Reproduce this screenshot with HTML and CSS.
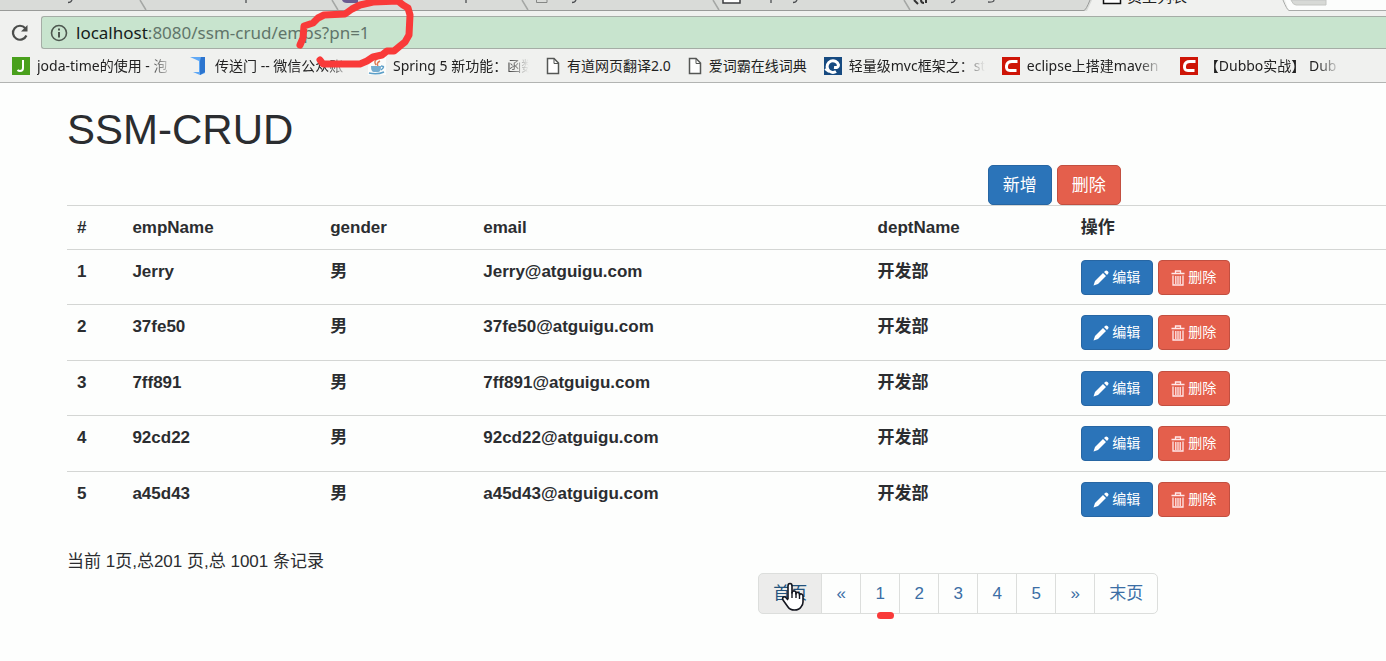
FILE: index.html
```
<!DOCTYPE html>
<html lang="zh-CN">
<head>
<meta charset="utf-8">
<title>员工列表</title>
<link rel="stylesheet" href="styles.css">
</head>
<body>
<header class="browser">
  <div class="tabs">
    <svg class="tabs-art" width="1386" height="11" viewBox="0 0 1386 11" fill="none" aria-hidden="true">
      <path d="M1087 11L1094 -4H1284L1290 11z" fill="#f0f1ef"/>
      <path d="M1284 -3L1289 11H1386V0z" fill="#fcfdfc"/>
      <path d="M0 10.500H1084Q1086 10 1090 0" stroke="#999b99"/>
      <path d="M1283 0Q1287 10 1289 10.500H1386" stroke="#a9aba9"/>
      <path d="M140 0L146 10M332 0L338 10M522 0L528 10M713 0L719 10M904 0L910 10" stroke="#a5a7a5" stroke-width="1.500"/>
      <path d="M1291 0Q1293 5 1296 5H1326V0z" fill="#d7d9d6" stroke="#c4c6c3"/>
      <path d="M342 0Q343 3 347 3H358V0z" fill="#6a5b90"/>
      <path d="M536.500 0V2.500H547V0" stroke="#858785"/>
      <path d="M723 0V3H740V0" fill="#fff" stroke="#3c3e40" stroke-width="1.500"/>
      <path d="M1103.500 0V3.500H1120.500V0" fill="#fff" stroke="#111" stroke-width="1.500"/>
      <path d="M914 0L918 4M921 0Q921 3 924 3M926 0V3" stroke="#333" stroke-width="2"/>
      <path d="M72 0Q71 2.500 68 2.500M246 0V3M466 0V3M576 0Q575 2.500 572 2.500M771 0V3M797 0Q796 2.500 793 2.500M955 0Q954 2.500 951 2.500M994 0Q994 2.500 988 2" stroke="#4d4f52" stroke-width="1.300"/>
    </svg>
    <span class="tab-title">员工列表</span>
  </div>
  <div class="toolbar">
    <button class="reload" aria-label="Reload">
      <svg width="20" height="20" viewBox="0 0 20 20" fill="none"><path d="M16.400 12.500A7 7 0 1 1 15.300 5.200" stroke="#4b4d4b" stroke-width="2.200"/><path d="M17.500 2V8.500H11z" fill="#4b4d4b"/></svg>
    </button>
    <div class="address">
      <svg width="18" height="18" viewBox="0 0 18 18" fill="none"><circle cx="9" cy="9" r="7.500" stroke="#4d574f" stroke-width="1.600"/><path d="M9 8V13.500M9 4.500V6.500" stroke="#4d574f" stroke-width="2"/></svg>
      <div class="url" role="textbox" aria-label="Address"><b>localhost</b>:8080/ssm-crud/emps?pn=1</div>
    </div>
  </div>
  <nav class="bookmarks">
    <a href="#"><svg width="18" height="18" viewBox="0 0 18 18" fill="none"><path d="M0 0H18V18H0z" fill="#49a01c"/><path d="M11 3V11Q11 14 8 14Q6.500 14 5.500 13" stroke="#fff" stroke-width="2"/></svg><span class="fade">joda-time的使用 - 泡</span></a>
    <a href="#"><svg width="18" height="18" viewBox="0 0 18 18"><path d="M0 0H11L15 2V16L10 18L3 15H9V4z" fill="#5fa8f5"/><path d="M11 0H15V15L10 18V4z" fill="#2c75cf"/></svg><span class="fade">传送门 -- 微信公众账</span></a>
    <a href="#"><svg width="18" height="18" viewBox="0 0 18 18" fill="none"><path d="M0 0H18V18H0z" fill="#fafcfb"/><path d="M10 1Q5 4 8 8M12 4Q8 6 10 9" stroke="#df7a55" stroke-width="1.500"/><path d="M3 9H13Q13 15 10 15H6Q3 15 3 9z" fill="#75add0"/><path d="M13 9Q18 9 13 13M1 16Q9 18 16 15" stroke="#5c9fc8" stroke-width="1.500"/></svg><span class="fade">Spring 5 新功能：函数</span></a>
    <a href="#"><svg width="14" height="18" viewBox="0 0 14 18" fill="none"><path d="M1.500 1.500H8L12.500 6V16.500H1.500z" fill="#fff" stroke="#555755" stroke-width="1.500"/><path d="M8 1.500V6.500H12.500" stroke="#555755"/></svg><span>有道网页翻译2.0</span></a>
    <a href="#"><svg width="14" height="18" viewBox="0 0 14 18" fill="none"><path d="M1.500 1.500H8L12.500 6V16.500H1.500z" fill="#fff" stroke="#555755" stroke-width="1.500"/><path d="M8 1.500V6.500H12.500" stroke="#555755"/></svg><span>爱词霸在线词典</span></a>
    <a href="#"><svg width="18" height="18" viewBox="0 0 18 18" fill="none"><path d="M0 0H18V18H0z" fill="#164a80"/><path d="M12 14.500A5.800 5.800 0 1 1 14.500 8Q14.500 11 10 10.500" stroke="#fff" stroke-width="3"/><path d="M1 12L5 15" stroke="#fff" stroke-width="2"/></svg><span class="fade">轻量级mvc框架之：st</span></a>
    <a href="#"><svg width="18" height="18" viewBox="0 0 18 18" fill="none"><path d="M0 0H18V18H0z" fill="#ce1507"/><path d="M15.500 4.500H10Q5 4.500 4.500 9T8 13.500H14.500" stroke="#fff" stroke-width="3"/></svg><span class="fade">eclipse上搭建maven</span></a>
    <a href="#"><svg width="18" height="18" viewBox="0 0 18 18" fill="none"><path d="M0 0H18V18H0z" fill="#ce1507"/><path d="M15.500 4.500H10Q5 4.500 4.500 9T8 13.500H14.500" stroke="#fff" stroke-width="3"/></svg><span class="fade">【Dubbo实战】 Dub</span></a>
  </nav>
  <svg class="scrawl" width="130" height="75" viewBox="290 -5 130 75" fill="none" aria-hidden="true"><path d="M300 45L303 38L304 26L313 23L318 18L324 15L345 14L352 9L360 5L373 2L398 1L403 5L408 8L410 15L409 35L405 42L400 46L394 51L387 51L382 55L373 57L367 61L360 64L323 64L320 60" stroke="#f93a39" stroke-width="7" stroke-linecap="round" stroke-linejoin="round"/></svg>
</header>
<svg class="defs" width="0" height="0" aria-hidden="true">
  <symbol id="pencil" viewBox="0 0 16 16"><path d="M0.500 15.500L2 11L10 3L13 6L5 14zM11 2L12.500 0.700Q13.500 0 14.500 1L15.200 1.700Q16 2.700 15.200 3.600L14 5z" fill="#fff"/></symbol>
  <symbol id="trash" viewBox="0 0 14 16"><path d="M0.500 3.500H13.500M4.500 3V1H9.500V3M2 5.500V15H12V5.500M4.800 6V14M7 6V14M9.200 6V14" fill="none" stroke="#ffe9ea" stroke-width="1.300"/></symbol>
</svg>
<main class="page">
  <h1>SSM-CRUD</h1>
  <div class="actions">
    <button class="btn primary">新增</button>
    <button class="btn danger">删除</button>
  </div>
  <table class="employees">
    <thead>
      <tr><th class="c-id">#</th><th class="c-name">empName</th><th class="c-gender">gender</th><th class="c-email">email</th><th class="c-dept">deptName</th><th>操作</th></tr>
    </thead>
    <tbody>
      <tr><th>1</th><th>Jerry</th><th>男</th><th>Jerry@atguigu.com</th><th>开发部</th><td><div class="ops"><button class="btn small primary"><svg width="16" height="16"><use href="#pencil"/></svg>编辑</button><button class="btn small danger"><svg width="14" height="16"><use href="#trash"/></svg>删除</button></div></td></tr>
      <tr><th>2</th><th>37fe50</th><th>男</th><th>37fe50@atguigu.com</th><th>开发部</th><td><div class="ops"><button class="btn small primary"><svg width="16" height="16"><use href="#pencil"/></svg>编辑</button><button class="btn small danger"><svg width="14" height="16"><use href="#trash"/></svg>删除</button></div></td></tr>
      <tr><th>3</th><th>7ff891</th><th>男</th><th>7ff891@atguigu.com</th><th>开发部</th><td><div class="ops"><button class="btn small primary"><svg width="16" height="16"><use href="#pencil"/></svg>编辑</button><button class="btn small danger"><svg width="14" height="16"><use href="#trash"/></svg>删除</button></div></td></tr>
      <tr><th>4</th><th>92cd22</th><th>男</th><th>92cd22@atguigu.com</th><th>开发部</th><td><div class="ops"><button class="btn small primary"><svg width="16" height="16"><use href="#pencil"/></svg>编辑</button><button class="btn small danger"><svg width="14" height="16"><use href="#trash"/></svg>删除</button></div></td></tr>
      <tr><th>5</th><th>a45d43</th><th>男</th><th>a45d43@atguigu.com</th><th>开发部</th><td><div class="ops"><button class="btn small primary"><svg width="16" height="16"><use href="#pencil"/></svg>编辑</button><button class="btn small danger"><svg width="14" height="16"><use href="#trash"/></svg>删除</button></div></td></tr>
    </tbody>
  </table>
  <p class="summary">当前 1页,总201 页,总 1001 条记录</p>
  <nav class="pagination">
    <a class="hover" href="#">首页<svg class="hand" width="24" height="30" viewBox="0 0 24 30"><path d="M7 17V4Q7 1.500 9 1.500T11 4V11Q11 9 13 9T15 11V12Q15 10 17 10.500T18.500 13Q19 11.500 20.500 12T22 14V20Q22 23 20 25Q18 28 13.500 28Q9 28 7 25L2 18Q1 16 2.500 15T7 18" fill="#fff" stroke="#14161f" stroke-width="1.600" stroke-linejoin="round"/><path d="M11 10V16M15 11V16M18.500 12V17" stroke="#14161f" stroke-width="1.400"/></svg></a>
    <a href="#">«</a>
    <a class="current" href="#">1<i class="underline"></i></a>
    <a href="#">2</a>
    <a href="#">3</a>
    <a href="#">4</a>
    <a href="#">5</a>
    <a href="#">»</a>
    <a href="#">末页</a>
  </nav>
</main>
</body>
</html>
```
FILE: styles.css
```
* { box-sizing: border-box; }

body {
  margin: 0;
  background: #fdfefd;
  color: #2b2d30;
  font: 17px/23px "Liberation Sans", "Noto Sans CJK SC", sans-serif;
}

button { font: inherit; cursor: pointer; }
a { text-decoration: none; }
svg { flex: none; }
.defs { display: none; }

/* Browser chrome */
.browser {
  position: relative;
  overflow: hidden;
  background: #f0f1ef;
  border-bottom: 1px solid #b2b4b2;
  font-family: "Noto Sans", "Noto Sans CJK SC", sans-serif;
}

.tabs {
  position: relative;
  height: 11px;
  overflow: hidden;
  background: #d9dbd8;
}
.tabs-art { display: block; }
.tab-title {
  position: absolute;
  left: 1127px;
  bottom: 5px;
  font-size: 15px;
  line-height: 20px;
  color: #222;
}

.toolbar {
  display: flex;
  align-items: center;
  padding: 5px 0 0 10px;
}
.reload {
  display: flex;
  width: 31px;
  padding: 0;
  border: 0;
  background: none;
}
.address {
  display: flex;
  flex: 1;
  align-items: center;
  gap: 8px;
  height: 33px;
  padding-left: 8px;
  border: 1px solid #a5ada6;
  border-right: 0;
  border-radius: 3px 0 0 3px;
  background: #c8e4ce;
}
.url { font-size: 17px; color: #61756a; white-space: nowrap; }
.url b { font-weight: 400; color: #15201a; }

.bookmarks {
  display: flex;
  gap: 17px;
  height: 33px;
  padding-left: 12px;
  align-items: center;
}
.bookmarks a {
  display: flex;
  flex: none;
  align-items: center;
  gap: 7px;
  font-size: 14px;
  color: #222;
  white-space: nowrap;
}
.fade {
  width: 136px;
  -webkit-mask-image: linear-gradient(to right, #000 82%, transparent);
  mask-image: linear-gradient(to right, #000 82%, transparent);
}
.scrawl { position: absolute; left: 290px; top: -5px; }

/* Page */
.page { padding: 0 0 24px 67px; }

h1 {
  margin: 0;
  padding: 23px 0 11px;
  font-size: 42px;
  line-height: 48px;
  font-weight: 400;
}

.actions { display: flex; gap: 5px; padding-left: 69.8%; }

.btn {
  display: flex;
  align-items: center;
  justify-content: center;
  height: 40px;
  padding: 0 14px;
  border: 1px solid;
  border-radius: 5px;
  font-size: 17px;
  color: #fff;
  white-space: nowrap;
}
.primary { background: #2b74b9; border-color: #2766a3; }
.danger { background: #e45f4c; border-color: #c24f40; }
.small { gap: 3px; width: 72px; height: 35px; padding: 0; font-size: 14px; border-radius: 4px; }

.employees {
  width: 100%;
  table-layout: fixed;
  border-spacing: 0;
}
.employees th, .employees td {
  padding: 10px 10px 9px;
  border-top: 1px solid #d4d6d4;
  text-align: left;
  vertical-align: top;
}
.employees thead th { padding-bottom: 10px; }
.employees tbody tr:nth-child(even) > * { padding-bottom: 10px; }
.c-id { width: 4.2%; }
.c-name { width: 15%; }
.c-gender { width: 11.6%; }
.c-email { width: 29.9%; }
.c-dept { width: 15.4%; }
.ops { display: flex; gap: 5px; }

.summary { margin: 0; padding: 24px 0 0; }

.pagination { display: flex; padding-left: 52.4%; }
.pagination a {
  position: relative;
  min-width: 40px;
  padding: 8px 14px 8px;
  border: 1px solid #dcdedc;
  margin-left: -1px;
  text-align: center;
  color: #3b6ea5;
}
.pagination a:first-child { margin-left: 0; border-radius: 5px 0 0 5px; }
.pagination a:last-child { border-radius: 0 5px 5px 0; }
.pagination .hover { background: #ececeb; color: #23527c; }
.pagination .current { z-index: 1; }
.hand { position: absolute; left: 22px; top: 8px; }
.underline {
  position: absolute;
  left: 16px;
  bottom: -6px;
  width: 17px;
  height: 7px;
  border-radius: 4px;
  background: #f93a39;
}
```
